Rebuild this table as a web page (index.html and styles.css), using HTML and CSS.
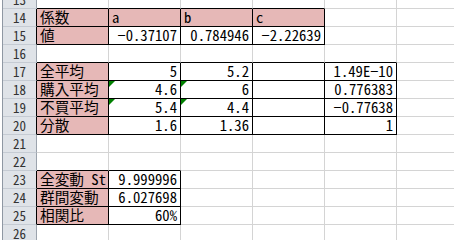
FILE: index.html
```html
<!DOCTYPE html>
<html lang="ja">
<head>
<meta charset="utf-8">
<link rel="stylesheet" href="styles.css">
</head>
<body>
<div class="sheet">
  <div class="c h">13</div><div class="c bb"></div><div class="c bb"></div><div class="c bb"></div><div class="c bb"></div><div class="c"></div><div class="c"></div>
  <div class="c h br">14</div><div class="c p bb br">係数</div><div class="c p bb br">a</div><div class="c p bb br">b</div><div class="c p bb br">c</div><div class="c"></div><div class="c"></div>
  <div class="c h br">15</div><div class="c p bb br">値</div><div class="c n bb br">−0.37107</div><div class="c n bb br">0.784946</div><div class="c n bb br">−2.22639</div><div class="c"></div><div class="c"></div>
  <div class="c h">16</div><div class="c bb"></div><div class="c bb"></div><div class="c bb"></div><div class="c bb"></div><div class="c bb"></div><div class="c"></div>
  <div class="c h br">17</div><div class="c p bb br">全平均</div><div class="c n bb br">5</div><div class="c n bb br">5.2</div><div class="c n bb br"></div><div class="c n bb br">1.49E−10</div><div class="c"></div>
  <div class="c h br">18</div><div class="c p bb br">購入平均</div><div class="c n bb br t">4.6</div><div class="c n bb br t">6</div><div class="c n bb br"></div><div class="c n bb br">0.776383</div><div class="c"></div>
  <div class="c h br">19</div><div class="c p bb br">不買平均</div><div class="c n bb br t">5.4</div><div class="c n bb br t">4.4</div><div class="c n bb br"></div><div class="c n bb br">−0.77638</div><div class="c"></div>
  <div class="c h br">20</div><div class="c p bb br">分散</div><div class="c n bb br">1.6</div><div class="c n bb br">1.36</div><div class="c n bb br"></div><div class="c n bb br">1</div><div class="c"></div>
  <div class="c h">21</div><div class="c"></div><div class="c"></div><div class="c"></div><div class="c"></div><div class="c"></div><div class="c"></div>
  <div class="c h">22</div><div class="c bb"></div><div class="c bb"></div><div class="c"></div><div class="c"></div><div class="c"></div><div class="c"></div>
  <div class="c h br">23</div><div class="c p bb br">全変動 St</div><div class="c n bb br">9.999996</div><div class="c"></div><div class="c"></div><div class="c"></div><div class="c"></div>
  <div class="c h br">24</div><div class="c p bb br">群間変動</div><div class="c n bb br">6.027698</div><div class="c"></div><div class="c"></div><div class="c"></div><div class="c"></div>
  <div class="c h br">25</div><div class="c p bb br">相関比</div><div class="c n bb br">60%</div><div class="c"></div><div class="c"></div><div class="c"></div><div class="c"></div>
  <div class="c h">26</div><div class="c"></div><div class="c"></div><div class="c"></div><div class="c"></div><div class="c"></div><div class="c"></div>
</div>
</body>
</html>
```
FILE: styles.css
```css
* {
  box-sizing: border-box;
  margin: 0;
  padding: 0;
}

html,
body {
  width: 454px;
  height: 240px;
  overflow: hidden;
  background: #ffffff;
}

body {
  font-family: "Noto Sans Mono CJK JP", "Noto Sans CJK JP", sans-serif;
  font-size: 14.67px;
  font-weight: 300;
  font-feature-settings: "hwid" 1;
  color: #000000;
}

.sheet {
  display: grid;
  grid-template-columns: 34px repeat(6, 72px);
  grid-auto-rows: 18px;
  width: max-content;
  margin-top: -9px;
  margin-left: 2px;
  border-left: 1px solid #8f98a3;
}

.c {
  position: relative;
  display: flex;
  align-items: flex-end;
  padding: 0 3px 2px 3px;
  line-height: 15px;
  white-space: nowrap;
  border-right: 1px solid #d4d4d4;
  border-bottom: 1px solid #d4d4d4;
}

.n {
  justify-content: flex-end;
}

.h {
  justify-content: center;
  align-items: center;
  padding: 0;
  font-size: 13px;
  color: #333333;
  background: #dfe3e8;
  border-right-color: #9ba3ad;
  border-bottom-color: #c5cbd3;
}

.p {
  background: #e6b8b7;
}

.bb {
  border-bottom-color: #000000;
}

.br {
  border-right-color: #000000;
}

.t::before {
  content: "";
  position: absolute;
  left: 0;
  top: 0;
  border-top: 6px solid #008000;
  border-right: 6px solid transparent;
}
```
